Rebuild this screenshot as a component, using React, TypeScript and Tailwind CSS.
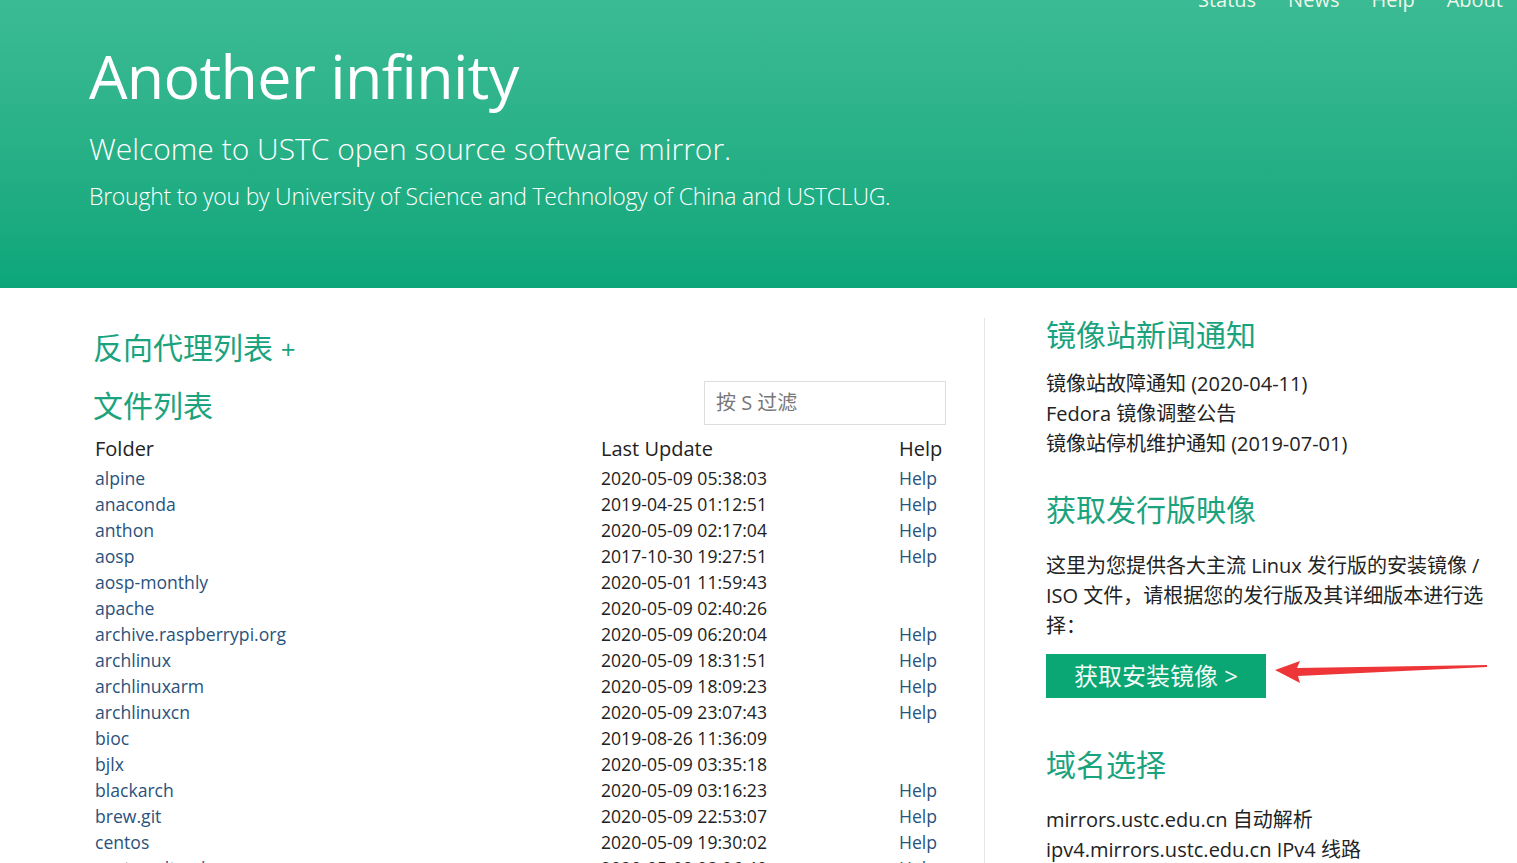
import React from "react";

const rows: [string, string, boolean][] = [
  ["alpine", "2020-05-09 05:38:03", true],
  ["anaconda", "2019-04-25 01:12:51", true],
  ["anthon", "2020-05-09 02:17:04", true],
  ["aosp", "2017-10-30 19:27:51", true],
  ["aosp-monthly", "2020-05-01 11:59:43", false],
  ["apache", "2020-05-09 02:40:26", false],
  ["archive.raspberrypi.org", "2020-05-09 06:20:04", true],
  ["archlinux", "2020-05-09 18:31:51", true],
  ["archlinuxarm", "2020-05-09 18:09:23", true],
  ["archlinuxcn", "2020-05-09 23:07:43", true],
  ["bioc", "2019-08-26 11:36:09", false],
  ["bjlx", "2020-05-09 03:35:18", false],
  ["blackarch", "2020-05-09 03:16:23", true],
  ["brew.git", "2020-05-09 22:53:07", true],
  ["centos", "2020-05-09 19:30:02", true],
  ["centos-altarch", "2020-05-09 03:06:40", true],
];

const news = ["镜像站故障通知 (2020-04-11)", "Fedora 镜像调整公告", "镜像站停机维护通知 (2019-07-01)"];

function Header() {
  return (
    <header className="h-[288px] overflow-hidden bg-gradient-to-b from-[#3bbb94] to-[#0aa67a] text-white">
      {/* nav is half scrolled off the top */}
      <nav className="-mt-[10px] flex h-[20px] justify-end gap-[32px] pr-[14px] text-[20px] leading-[20px] text-[#eef6ea]">
        <a>Status</a>
        <a>News</a>
        <a>Help</a>
        <a>About</a>
      </nav>
      <div className="pl-[89px]">
        <h1 className="mt-[34px] text-[61px] leading-[63px] font-normal tracking-[-0.7px]">Another infinity</h1>
        <p className="mt-[27px] text-[30px] leading-[30px] font-light">Welcome to USTC open source software mirror.</p>
        <p className="mt-[21px] text-[23px] leading-[23px] font-light tracking-[-0.25px]">
          Brought to you by University of Science and Technology of China and USTCLUG.
        </p>
      </div>
    </header>
  );
}

function FileList() {
  return (
    <div className="w-[853px] shrink-0">
      <h2 className="mt-[13px] text-[30px] leading-[33px] text-[#1ba37e]">
        反向代理列表 <span className="text-[26px]">+</span>
      </h2>
      <div className="mt-[15px] flex h-[44px] items-center justify-between">
        <h2 className="mt-[4px] text-[30px] leading-[33px] text-[#1ba37e]">文件列表</h2>
        <div className="flex h-[44px] w-[242px] items-center border border-[#dddddd] px-[11px] text-[20px] text-[#777]">
          按 S 过滤
        </div>
      </div>
      <div className="mt-[11px] flex h-[29px] pb-[3px] pl-[2px] text-[20px] leading-[26px] text-[#222]">
        <div className="w-[506px]">Folder</div>
        <div className="w-[298px]">Last Update</div>
        <div>Help</div>
      </div>
      {rows.map(([name, date, help]) => (
        <div key={name} className="flex h-[26px] pl-[2px] text-[17.6px] leading-[26px]">
          <a className="w-[506px] text-[#29527c]">{name}</a>
          <div className="w-[298px] text-[#222]">{date}</div>
          <a className="text-[#29527c]">{help ? "Help" : ""}</a>
        </div>
      ))}
    </div>
  );
}

function Sidebar() {
  return (
    <div className="relative w-[445px] shrink-0 text-[20px] leading-[30px] text-[#222]">
      <h2 className="text-[30px] leading-[33px] text-[#1ba37e]">镜像站新闻通知</h2>
      <ul className="mt-[18px]">
        {news.map((n) => (
          <li key={n}>
            <a>{n}</a>
          </li>
        ))}
      </ul>
      <h2 className="mt-[34px] text-[30px] leading-[33px] text-[#1ba37e]">获取发行版映像</h2>
      <p className="mt-[25px]">
        这里为您提供各大主流 Linux 发行版的安装镜像 /
        <br />
        ISO 文件，请根据您的发行版及其详细版本进行选
        <br />
        择：
      </p>
      <div className="relative mt-[13px]">
        <a className="flex h-[44px] w-[220px] items-center justify-center bg-[#0aa673] text-[24px] text-[#f2faf5]">
          获取安装镜像 &gt;
        </a>
        {/* red annotation arrow */}
        <svg className="absolute left-[228px] top-[4px]" width="215" height="30" viewBox="0 0 215 30" aria-hidden>
          <polygon points="1,12 26,3 23,10 213,7 213,9 24,18 26,25" fill="#ee3537" />
        </svg>
      </div>
      <h2 className="mt-[50px] text-[30px] leading-[33px] text-[#1ba37e]">域名选择</h2>
      <ul className="mt-[24px]">
        <li>mirrors.ustc.edu.cn 自动解析</li>
        <li>ipv4.mirrors.ustc.edu.cn IPv4 线路</li>
      </ul>
    </div>
  );
}

export default function App() {
  return (
    <div
      className="h-[863px] overflow-hidden bg-white"
      style={{ fontFamily: '"Open Sans", "Noto Sans CJK SC", sans-serif' }}
    >
      <Header />
      <main className="flex pt-[30px] pl-[93px]">
        <FileList />
        <div className="ml-[38px] mr-[61px] w-px shrink-0 self-stretch bg-[#e6e6e6]" />
        <Sidebar />
      </main>
    </div>
  );
}
